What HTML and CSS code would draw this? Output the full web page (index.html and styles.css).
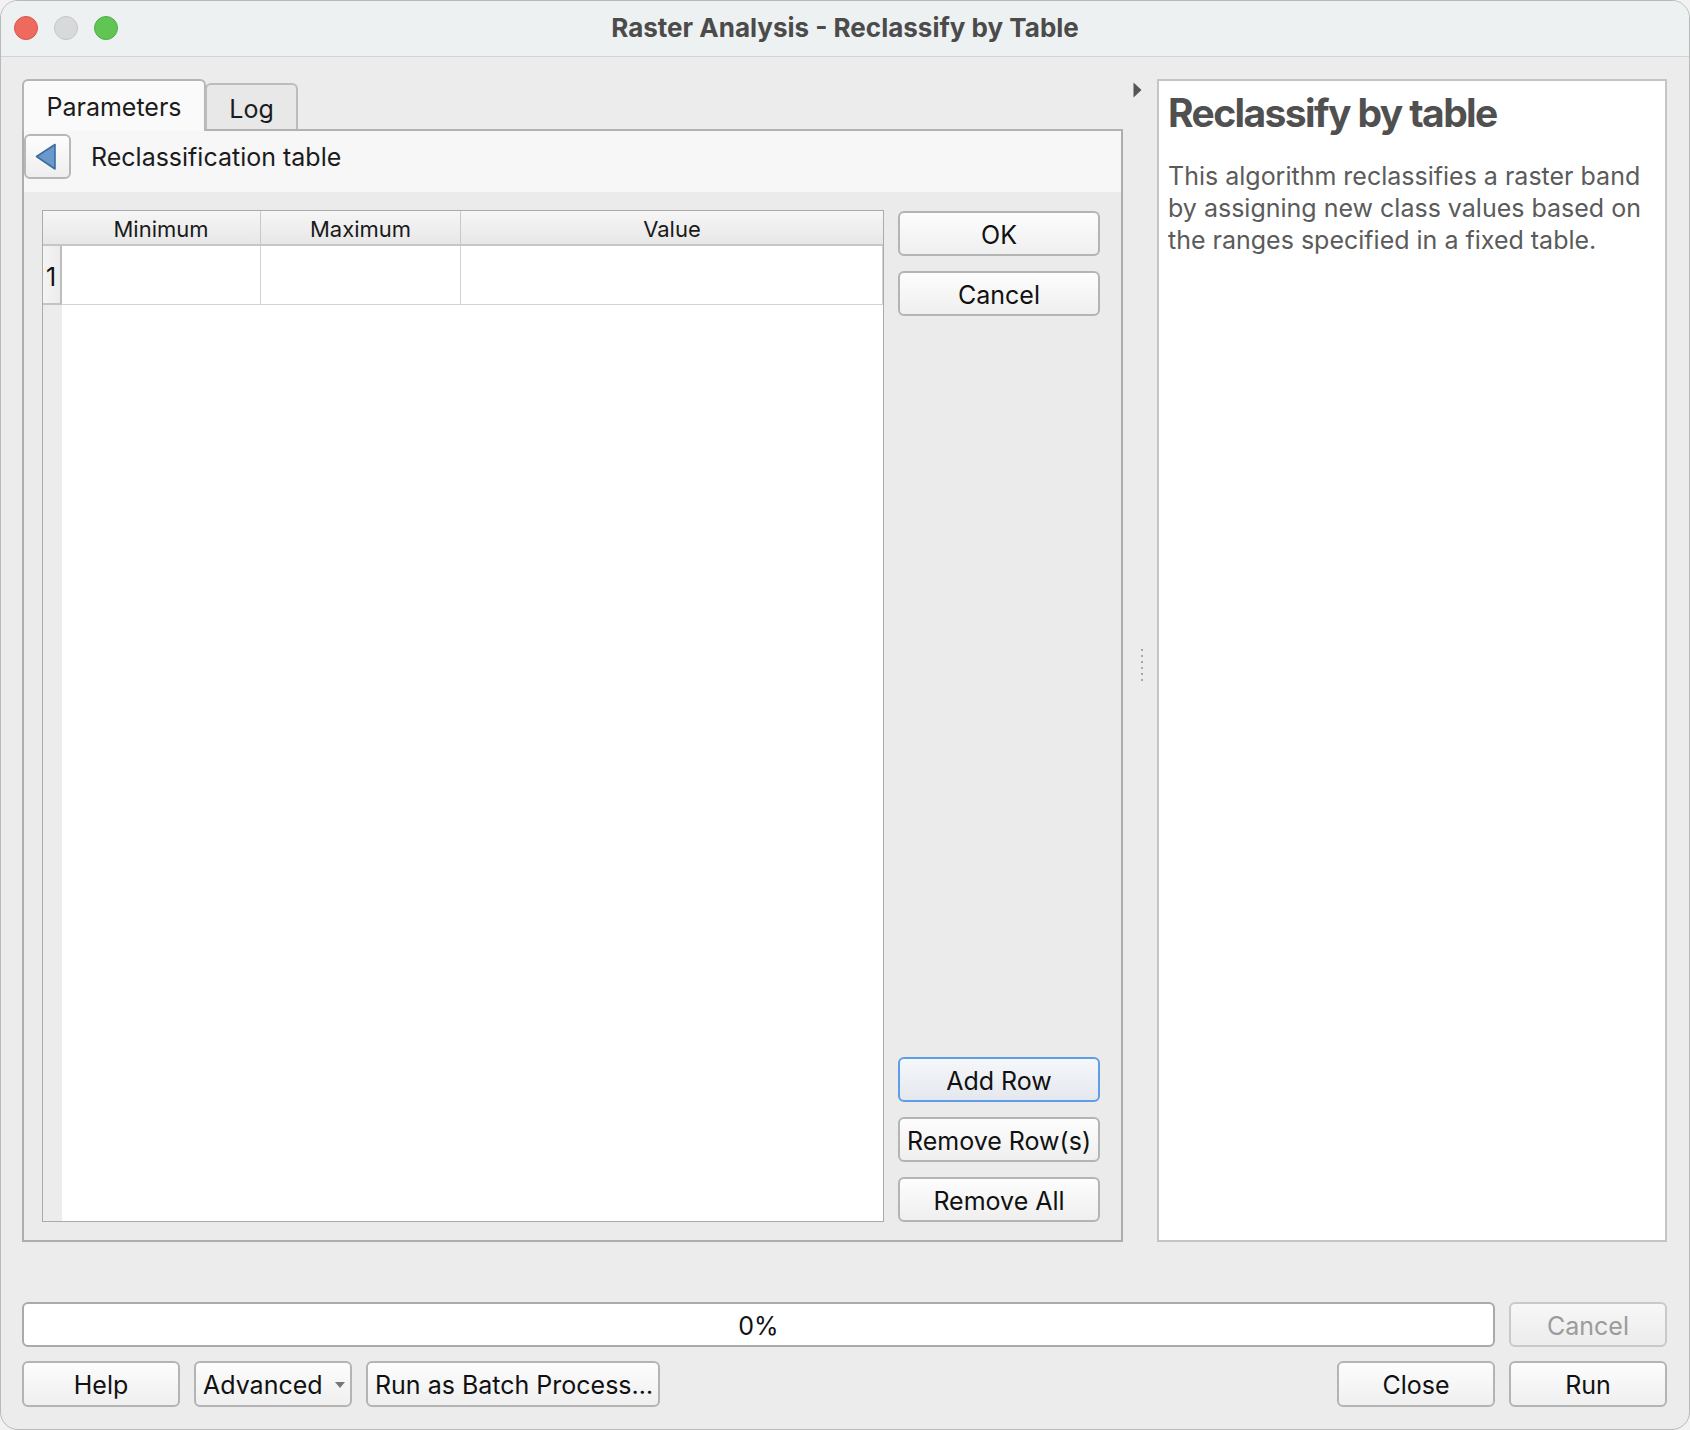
FILE: index.html
```html
<!DOCTYPE html>
<html lang="en">
<head>
<meta charset="utf-8">
<title>Raster Analysis - Reclassify by Table</title>
<link rel="stylesheet" href="styles.css">
</head>
<body>
<div class="window">
  <header class="titlebar">
    <div class="lights">
      <span class="light red"></span>
      <span class="light gray"></span>
      <span class="light green"></span>
    </div>
    <div class="title">Raster Analysis - Reclassify by Table</div>
  </header>
  <div class="content">
    <div class="main">
      <div class="leftcol">
        <div class="tabs">
          <div class="tab active">Parameters</div>
          <div class="tab log">Log</div>
        </div>
        <div class="panel">
          <div class="panel-head">
            <button class="back" type="button">
              <svg width="22" height="28" viewBox="0 0 22 28"><path d="M1.5 13.5 L20 1.5 L20 26 Z" fill="#6a98cc" stroke="#3d6d9f" stroke-width="1.6" stroke-linejoin="round"/></svg>
            </button>
            <span class="panel-title">Reclassification table</span>
          </div>
          <div class="panel-body">
            <div class="grid">
              <div class="grid-head">
                <div class="corner"></div>
                <div class="hcell c-min">Minimum</div>
                <div class="hcell c-max">Maximum</div>
                <div class="hcell c-val">Value</div>
              </div>
              <div class="grid-body">
                <div class="rowheads">
                  <div class="rowhead">1</div>
                </div>
                <div class="cells">
                  <div class="row">
                    <div class="cell c-min"></div>
                    <div class="cell c-max"></div>
                    <div class="cell c-val"></div>
                  </div>
                </div>
              </div>
            </div>
            <div class="side-buttons">
              <div class="btn-group">
                <button class="btn" type="button">OK</button>
                <button class="btn" type="button">Cancel</button>
              </div>
              <div class="btn-group">
                <button class="btn focus" type="button">Add Row</button>
                <button class="btn" type="button">Remove Row(s)</button>
                <button class="btn" type="button">Remove All</button>
              </div>
            </div>
          </div>
        </div>
      </div>
      <div class="splitter">
        <svg class="collapse" width="9" height="16" viewBox="0 0 9 16"><path d="M0.5 0.5 L8.5 8 L0.5 15.5 Z" fill="#555"/></svg>
        <div class="grip"><span></span><span></span><span></span><span></span><span></span><span></span></div>
      </div>
      <div class="help">
        <h1 class="help-title">Reclassify by table</h1>
        <p class="help-text">This algorithm reclassifies a raster band by assigning new class values based on the ranges specified in a fixed table.</p>
      </div>
    </div>
    <div class="progress-row">
      <div class="progress">0%</div>
      <button class="btn disabled" type="button">Cancel</button>
    </div>
    <div class="action-row">
      <button class="btn" type="button">Help</button>
      <button class="btn dropdown" type="button">Advanced<span class="caret"></span></button>
      <button class="btn batch" type="button">Run as Batch Process…</button>
      <span class="spacer"></span>
      <button class="btn" type="button">Close</button>
      <button class="btn" type="button">Run</button>
    </div>
  </div>
</div>
</body>
</html>
```

FILE: styles.css
```css
* { box-sizing: border-box; }

html, body {
  margin: 0;
  padding: 0;
  background: #f2f2f2;
}

body {
  font-family: Inter, "Liberation Sans", sans-serif;
  font-size: 25px;
  color: #111;
}

.window {
  width: 1690px;
  height: 1430px;
  background: #ececec;
  border-radius: 18px;
  border: 1px solid #b9b9b9;
  overflow: hidden;
  display: flex;
  flex-direction: column;
}

/* title bar */
.titlebar {
  position: relative;
  height: 56px;
  flex: none;
  background: #eef1f2;
  border-bottom: 1px solid #d2d4d5;
  display: flex;
  align-items: center;
  justify-content: center;
  padding-bottom: 3px;
}

.lights {
  position: absolute;
  left: 13px;
  top: 15px;
  display: flex;
  gap: 16px;
}

.light {
  width: 24px;
  height: 24px;
  border-radius: 50%;
  display: block;
}
.light.red { background: #ee6a5f; border: 1px solid #d9544a; }
.light.gray { background: #d7d9db; border: 1px solid #c3c5c7; }
.light.green { background: #61c554; border: 1px solid #4fae42; }

.title {
  font-weight: 700;
  font-size: 26px;
  color: #4b4b4b;
}

/* content */
.content {
  flex: 1;
  display: flex;
  flex-direction: column;
  padding: 22px 22px 22px 21px;
}

.main {
  flex: 1;
  display: flex;
  min-height: 0;
}

.leftcol {
  width: 1101px;
  display: flex;
  flex-direction: column;
}

.tabs {
  display: flex;
  align-items: flex-start;
  height: 52px;
  margin-bottom: -2px;
  position: relative;
  z-index: 1;
}

.tab {
  height: 46px;
  margin-top: 4px;
  display: flex;
  align-items: center;
  justify-content: center;
  border: 2px solid #bcbcbc;
  border-bottom: none;
  border-radius: 6px 6px 0 0;
  background: #e8e8e8;
  color: #1c1c1c;
}

.tab.log {
  width: 93px;
  margin-left: -1px;
  padding-top: 4px;
}

.tab.active {
  height: 52px;
  margin-top: 0;
  padding-top: 2px;
  background: #fafafa;
  border-color: #b5b5b5;
  width: 184px;
}

.panel {
  flex: 1;
  display: flex;
  flex-direction: column;
  border: 2px solid #adadad;
  border-top-color: #b2b2b2;
  background: #ebebeb;
}

.panel-head {
  height: 61px;
  flex: none;
  background: #f7f7f7;
  display: flex;
  align-items: flex-start;
  padding-top: 3px;
}

.back {
  width: 47px;
  height: 45px;
  border: 2px solid #b7b7b7;
  border-radius: 6px;
  background: linear-gradient(#fdfdfd, #eeeeee);
  display: flex;
  align-items: center;
  justify-content: center;
  padding: 0 4px 0 0;
  margin: 0;
}

.panel-title {
  margin-left: 20px;
  margin-top: 8px;
  font-size: 25px;
  color: #1c1c1c;
}

.panel-body {
  flex: 1;
  display: flex;
  padding: 18px 20px 18px 18px;
  gap: 14px;
  min-height: 0;
}

/* table */
.grid {
  width: 842px;
  display: flex;
  flex-direction: column;
  border: 1px solid #ababab;
  background: #fff;
}

.grid-head {
  display: flex;
  height: 35px;
  flex: none;
  background: linear-gradient(#f6f6f6, #e7e7e7);
  border-bottom: 2px solid #c6c6c6;
}

.corner { width: 19px; }

.hcell {
  display: flex;
  align-items: center;
  justify-content: center;
  padding-top: 3px;
  font-size: 22px;
  color: #1a1a1a;
  border-right: 1px solid #c9c9c9;
}

.c-min { width: 199px; }
.c-max { width: 200px; }
.c-val { flex: 1; border-right: none; }

.grid-body {
  flex: 1;
  display: flex;
}

.rowheads {
  width: 19px;
  background: #ececec;
}

.rowhead {
  height: 59px;
  background: linear-gradient(90deg, #f4f4f4, #ececec);
  border-right: 2px solid #bdbdbd;
  border-bottom: 2px solid #c4c4c4;
  display: flex;
  align-items: center;
  padding-left: 3px;
  padding-top: 5px;
  font-size: 25px;
  color: #111;
}

.cells {
  flex: 1;
  background: #fff;
}

.row {
  display: flex;
  height: 59px;
  border-bottom: 1px solid #d2d2d2;
}

.cell {
  border-right: 1px solid #d2d2d2;
}

/* buttons */
.side-buttons {
  width: 202px;
  display: flex;
  flex-direction: column;
  justify-content: space-between;
  padding-top: 1px;
}

.btn-group {
  display: flex;
  flex-direction: column;
  gap: 15px;
}

.btn {
  height: 45px;
  border: 2px solid #b4b4b4;
  border-radius: 6px;
  background: linear-gradient(#fdfdfd, #efefef);
  font-family: Inter, "Liberation Sans", sans-serif;
  font-size: 25px;
  color: #111;
  padding: 2px 4px 0;
  margin: 0;
  display: flex;
  align-items: center;
  justify-content: center;
  white-space: nowrap;
}

.btn.focus {
  border-color: #5f9ee6;
  background: linear-gradient(#f5f7fa, #e4e8ee);
}

.btn.disabled {
  color: #9b9b9b;
  border-color: #c9c9c9;
  background: linear-gradient(#f7f7f7, #ececec);
}

/* splitter */
.splitter {
  width: 34px;
  display: flex;
  flex-direction: column;
  align-items: flex-start;
  padding-left: 10px;
}

.collapse {
  margin-top: 3px;
  display: block;
}

.grip {
  margin: auto 0 auto 8px;
  display: flex;
  flex-direction: column;
  gap: 4px;
  padding-bottom: 10px;
}

.grip span {
  width: 2px;
  height: 2px;
  background: #a8a8a8;
  display: block;
}

/* help panel */
.help {
  flex: 1;
  background: #fff;
  border: 2px solid #c4c4c4;
  padding: 8px 10px 10px 9px;
}

.help-title {
  margin: 0 0 24px;
  font-size: 39px;
  line-height: 47px;
  font-weight: 700;
  letter-spacing: -1.6px;
  color: #505050;
}

.help-text {
  margin: 0;
  font-size: 25px;
  line-height: 32px;
  color: #5b5b5b;
  max-width: 486px;
}

/* bottom rows */
.progress-row {
  display: flex;
  gap: 14px;
  margin-top: 60px;
  height: 45px;
  flex: none;
}

.progress {
  flex: 1;
  background: #fff;
  border: 2px solid #aaaaaa;
  border-radius: 6px;
  display: flex;
  align-items: center;
  justify-content: center;
  padding-top: 2px;
  font-size: 25px;
  color: #111;
}

.progress-row .btn { width: 158px; height: 45px; }

.action-row {
  display: flex;
  gap: 14px;
  margin-top: 14px;
  height: 46px;
  flex: none;
}

.action-row .btn { width: 158px; height: 46px; }

.action-row .btn.dropdown {
  justify-content: flex-start;
  padding-left: 7px;
  gap: 12px;
}

.caret {
  width: 0;
  height: 0;
  border-left: 5px solid transparent;
  border-right: 5px solid transparent;
  border-top: 6px solid #777;
}

.action-row .btn.batch {
  width: 294px;
  justify-content: flex-start;
  padding-left: 7px;
}

.spacer { flex: 1; }
```
